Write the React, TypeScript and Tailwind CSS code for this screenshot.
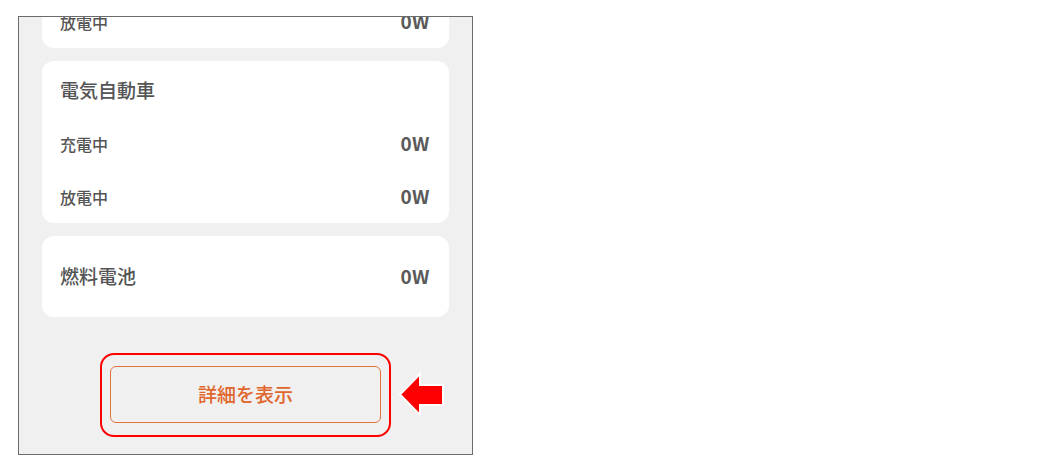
const font = "font-['Noto_Sans_CJK_JP','Noto_Sans',sans-serif]";

function Row({ label, value, big = false, tall = false }: { label: string; value: string; big?: boolean; tall?: boolean }) {
  return (
    <div className={`flex items-center justify-between pl-[18px] pr-[19px] ${tall ? "h-[81px]" : "h-[53px]"}`}>
      <span className={big ? "text-[19px] font-medium text-[#555555]" : "text-[16px] font-medium text-[#555555]"}>{label}</span>
      <span className="text-[19px] font-bold tracking-[0.5px] text-[#5a5a5a]">{value}</span>
    </div>
  );
}

export default function App() {
  return (
    <div className={`w-[1058px] h-[474px] bg-white pl-[18px] pt-[16px] ${font}`}>
      <div className="w-[455px] h-[439px] overflow-hidden border border-[#6b6b6b] bg-[#f0f0f0]">
        <div className="flex flex-col gap-[13px] px-[23px]">
          {/* scrolled card, only the last row shows */}
          <div className="-mt-[22px] rounded-[12px] bg-white">
            <Row label="放電中" value="0W" />
          </div>

          <div className="rounded-[12px] bg-white">
            <div className="pl-[18px] pt-[17px] pb-[15px] text-[19px] font-medium leading-[24px] text-[#555555]">電気自動車</div>
            <Row label="充電中" value="0W" />
            <Row label="放電中" value="0W" />
          </div>

          <div className="rounded-[12px] bg-white">
            <Row label="燃料電池" value="0W" big tall />
          </div>
        </div>

        <div className="mt-[36px] flex justify-center">
          <div className="relative rounded-[14px] border-2 border-[#ff0000] px-[8px] pt-[11px] pb-[12px]">
            <button className="flex h-[57px] w-[271px] items-center justify-center rounded-[6px] border border-[#e0733e] text-[19px] font-medium text-[#e0662c]">
              詳細を表示
            </button>
            <svg
              className="absolute left-full top-[16px] ml-[9px]"
              width="48"
              height="46"
              viewBox="0 0 48 46"
            >
              <polygon
                points="2,23.5 22,3 22,14 45,14 45,34 22,34 22,44"
                fill="#ff0000"
                stroke="#ffffff"
                strokeWidth="2"
                strokeLinejoin="miter"
              />
            </svg>
          </div>
        </div>
      </div>
    </div>
  );
}
